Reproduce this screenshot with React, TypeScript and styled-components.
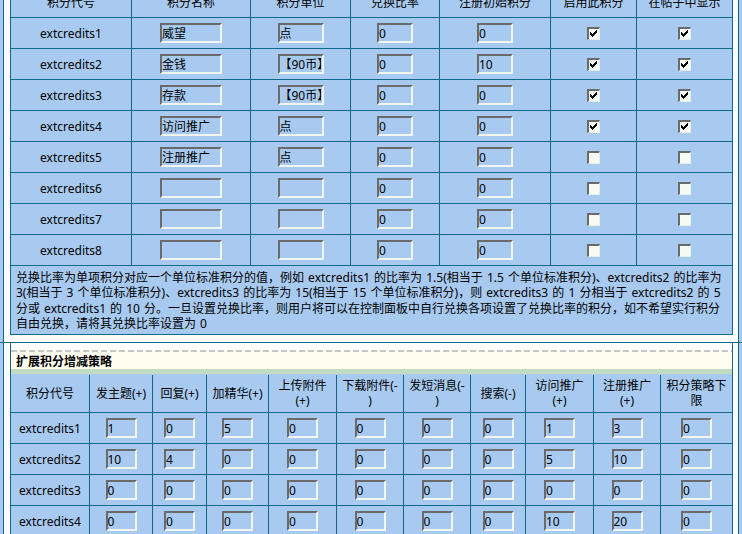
import React from 'react';
import styled, { createGlobalStyle } from 'styled-components';

const LINE = '#0E6888';
const CELL = '#A8CAF0';
const FONT = 'Tahoma, "Noto Sans", "Noto Sans CJK SC", sans-serif';

const Global = createGlobalStyle`
  html, body { margin: 0; padding: 0; background: ${CELL}; overflow: hidden; }
  body { font-family: ${FONT}; font-size: 12px; color: #000; }
`;

const Page = styled.div`
  width: 742px;
  height: 534px;
  overflow: hidden;
  background: ${CELL};
`;

const Frame = styled.div<{ $top?: number; $bottom?: number }>`
  margin-left: 3px;
  margin-top: ${(p) => p.$top ?? 0}px;
  width: 736px;
  box-sizing: border-box;
  border-left: 1px solid ${LINE};
  border-right: 1px solid ${LINE};
  background: #fff;
  padding: 0 5px ${(p) => p.$bottom ?? 0}px 6px;
`;

const Divider = styled.div`
  height: 1px;
  width: 742px;
  background: ${LINE};
`;

const Grid = styled.div<{ $cols: string; $noTop?: boolean }>`
  display: grid;
  grid-template-columns: ${(p) => p.$cols};
  gap: 1px;
  width: 723px;
  box-sizing: border-box;
  background: ${LINE};
  border: 1px solid ${LINE};
  ${(p) => (p.$noTop ? 'border-top: none;' : '')}
`;

const Cell = styled.div<{ $h?: number }>`
  background: ${CELL};
  height: ${(p) => p.$h ?? 30}px;
  display: flex;
  align-items: center;
  justify-content: center;
  text-align: center;
  white-space: nowrap;
  overflow: hidden;
`;

const HeadCell = styled(Cell)`
  align-items: flex-end;
  padding-bottom: 6px;
  box-sizing: border-box;
`;

const HeadText = styled.div`
  line-height: 15px;
  white-space: nowrap;
`;

const NoteCell = styled.div`
  grid-column: 1 / -1;
  background: ${CELL};
  height: 68px;
  box-sizing: border-box;
  padding: 4px 0 0 5px;
  line-height: 15.3px;
  overflow: hidden;
`;

const NoteLine = styled.div`
  white-space: nowrap;
  word-spacing: 1px;
`;

const TitleCell = styled.div`
  grid-column: 1 / -1;
  height: 30px;
  box-sizing: border-box;
  background: #fff;
  padding-top: 7px;
  display: flex;
  flex-direction: column;
`;

const TitleBand = styled.div`
  flex: 1;
  background: #fffdf0;
  border-bottom: 6px solid #c2dcc2;
  display: flex;
  flex-direction: column;
`;

const Dashes = styled.div`
  height: 2px;
  flex: none;
  background: repeating-linear-gradient(90deg, #c6c6c6 0 6px, transparent 6px 9px);
`;

const TitleText = styled.div`
  flex: 1;
  font-weight: bold;
  padding: 2px 0 0 5px;
  line-height: 15px;
  display: flex;
  align-items: center;
`;

const TextBox = styled.input<{ $w: number }>`
  width: ${(p) => p.$w}px;
  height: 20px;
  box-sizing: border-box;
  margin: 0;
  padding: 0 1px 0 0;
  border-top: 2px solid #6a6a6a;
  border-left: 2px solid #6a6a6a;
  border-bottom: 2px solid #f2f6ee;
  border-right: 2px solid #f2f6ee;
  background: ${CELL};
  font-family: ${FONT};
  font-size: 12px;
  color: #000;
  outline: none;
`;

const CheckBox = styled.span`
  display: inline-flex;
  align-items: center;
  justify-content: center;
  width: 13px;
  height: 13px;
  box-sizing: border-box;
  border-top: 2px solid #6a6a6a;
  border-left: 2px solid #6a6a6a;
  border-bottom: 1px solid #e6efe6;
  border-right: 1px solid #e6efe6;
  background: #f6fbf4;
`;

const Check: React.FC<{ on: boolean }> = ({ on }) => (
  <CheckBox>
    {on && (
      <svg width="8" height="8" viewBox="0 0 8 8" shapeRendering="crispEdges">
        <path d="M0 2h1v1h1v1h1v-1h1v-1h1v-1h1v-1h1v3h-1v1h-1v1h-1v1h-1v1h-1v-1h-1v-1h-1v-1h-1z" fill="#000" />
      </svg>
    )}
  </CheckBox>
);

const COLS1 = '120px 118px 99px 88px 110px 85px 95px';
const COLS2 = '78px 62px 53px 61px 67px 66px 66px 54px 67px 66px 71px';

const heads1 = ['积分代号', '积分名称', '积分单位', '兑换比率', '注册初始积分', '启用此积分', '在帖子中显示'];

const rows1: [string, string, string, string, boolean][] = [
  ['威望', '点', '0', '0', true],
  ['金钱', '【90币】', '0', '10', true],
  ['存款', '【90币】', '0', '0', true],
  ['访问推广', '点', '0', '0', true],
  ['注册推广', '点', '0', '0', false],
  ['', '', '0', '0', false],
  ['', '', '0', '0', false],
  ['', '', '0', '0', false],
];

const heads2: string[][] = [
  ['积分代号'],
  ['发主题(+)'],
  ['回复(+)'],
  ['加精华(+)'],
  ['上传附件', '(+)'],
  ['下载附件(-', ')'],
  ['发短消息(-', ')'],
  ['搜索(-)'],
  ['访问推广', '(+)'],
  ['注册推广', '(+)'],
  ['积分策略下', '限'],
];

const rows2: string[][] = [
  ['1', '0', '5', '0', '0', '0', '0', '1', '3', '0'],
  ['10', '4', '0', '0', '0', '0', '0', '5', '10', '0'],
  ['0', '0', '0', '0', '0', '0', '0', '0', '0', '0'],
  ['0', '0', '0', '0', '0', '0', '0', '10', '20', '0'],
];

const notes = [
  '兑换比率为单项积分对应一个单位标准积分的值，例如 extcredits1 的比率为 1.5(相当于 1.5 个单位标准积分)、extcredits2 的比率为',
  '3(相当于 3 个单位标准积分)、extcredits3 的比率为 15(相当于 15 个单位标准积分)，则 extcredits3 的 1 分相当于 extcredits2 的 5',
  '分或 extcredits1 的 10 分。一旦设置兑换比率，则用户将可以在控制面板中自行兑换各项设置了兑换比率的积分，如不希望实行积分',
  '自由兑换，请将其兑换比率设置为 0',
];

export default function App() {
  return (
    <Page>
      <Global />
      <Frame $top={-14} $bottom={7}>
        <Grid $cols={COLS1}>
          {heads1.map((h) => (
            <HeadCell key={h}>{h}</HeadCell>
          ))}
          {rows1.map((r, i) => (
            <React.Fragment key={i}>
              <Cell>extcredits{i + 1}</Cell>
              <Cell>
                <TextBox $w={62} readOnly value={r[0]} />
              </Cell>
              <Cell>
                <TextBox $w={46} readOnly value={r[1]} />
              </Cell>
              <Cell>
                <TextBox $w={36} readOnly value={r[2]} />
              </Cell>
              <Cell>
                <TextBox $w={36} readOnly value={r[3]} />
              </Cell>
              <Cell>
                <Check on={r[4]} />
              </Cell>
              <Cell>
                <Check on={r[4]} />
              </Cell>
            </React.Fragment>
          ))}
          <NoteCell>
            {notes.map((n) => (
              <NoteLine key={n}>{n}</NoteLine>
            ))}
          </NoteCell>
        </Grid>
      </Frame>
      <Divider />
      <Frame>
        <Grid $cols={COLS2} $noTop>
          <TitleCell>
            <TitleBand>
              <Dashes />
              <TitleText>扩展积分增减策略</TitleText>
            </TitleBand>
          </TitleCell>
          {heads2.map((h) => (
            <Cell key={h.join('')} $h={38}>
              <div>
                {h.map((t) => (
                  <HeadText key={t}>{t}</HeadText>
                ))}
              </div>
            </Cell>
          ))}
          {rows2.map((r, i) => (
            <React.Fragment key={i}>
              <Cell>extcredits{i + 1}</Cell>
              {r.map((v, j) => (
                <Cell key={j}>
                  <TextBox $w={31} readOnly value={v} />
                </Cell>
              ))}
            </React.Fragment>
          ))}
        </Grid>
      </Frame>
    </Page>
  );
}
